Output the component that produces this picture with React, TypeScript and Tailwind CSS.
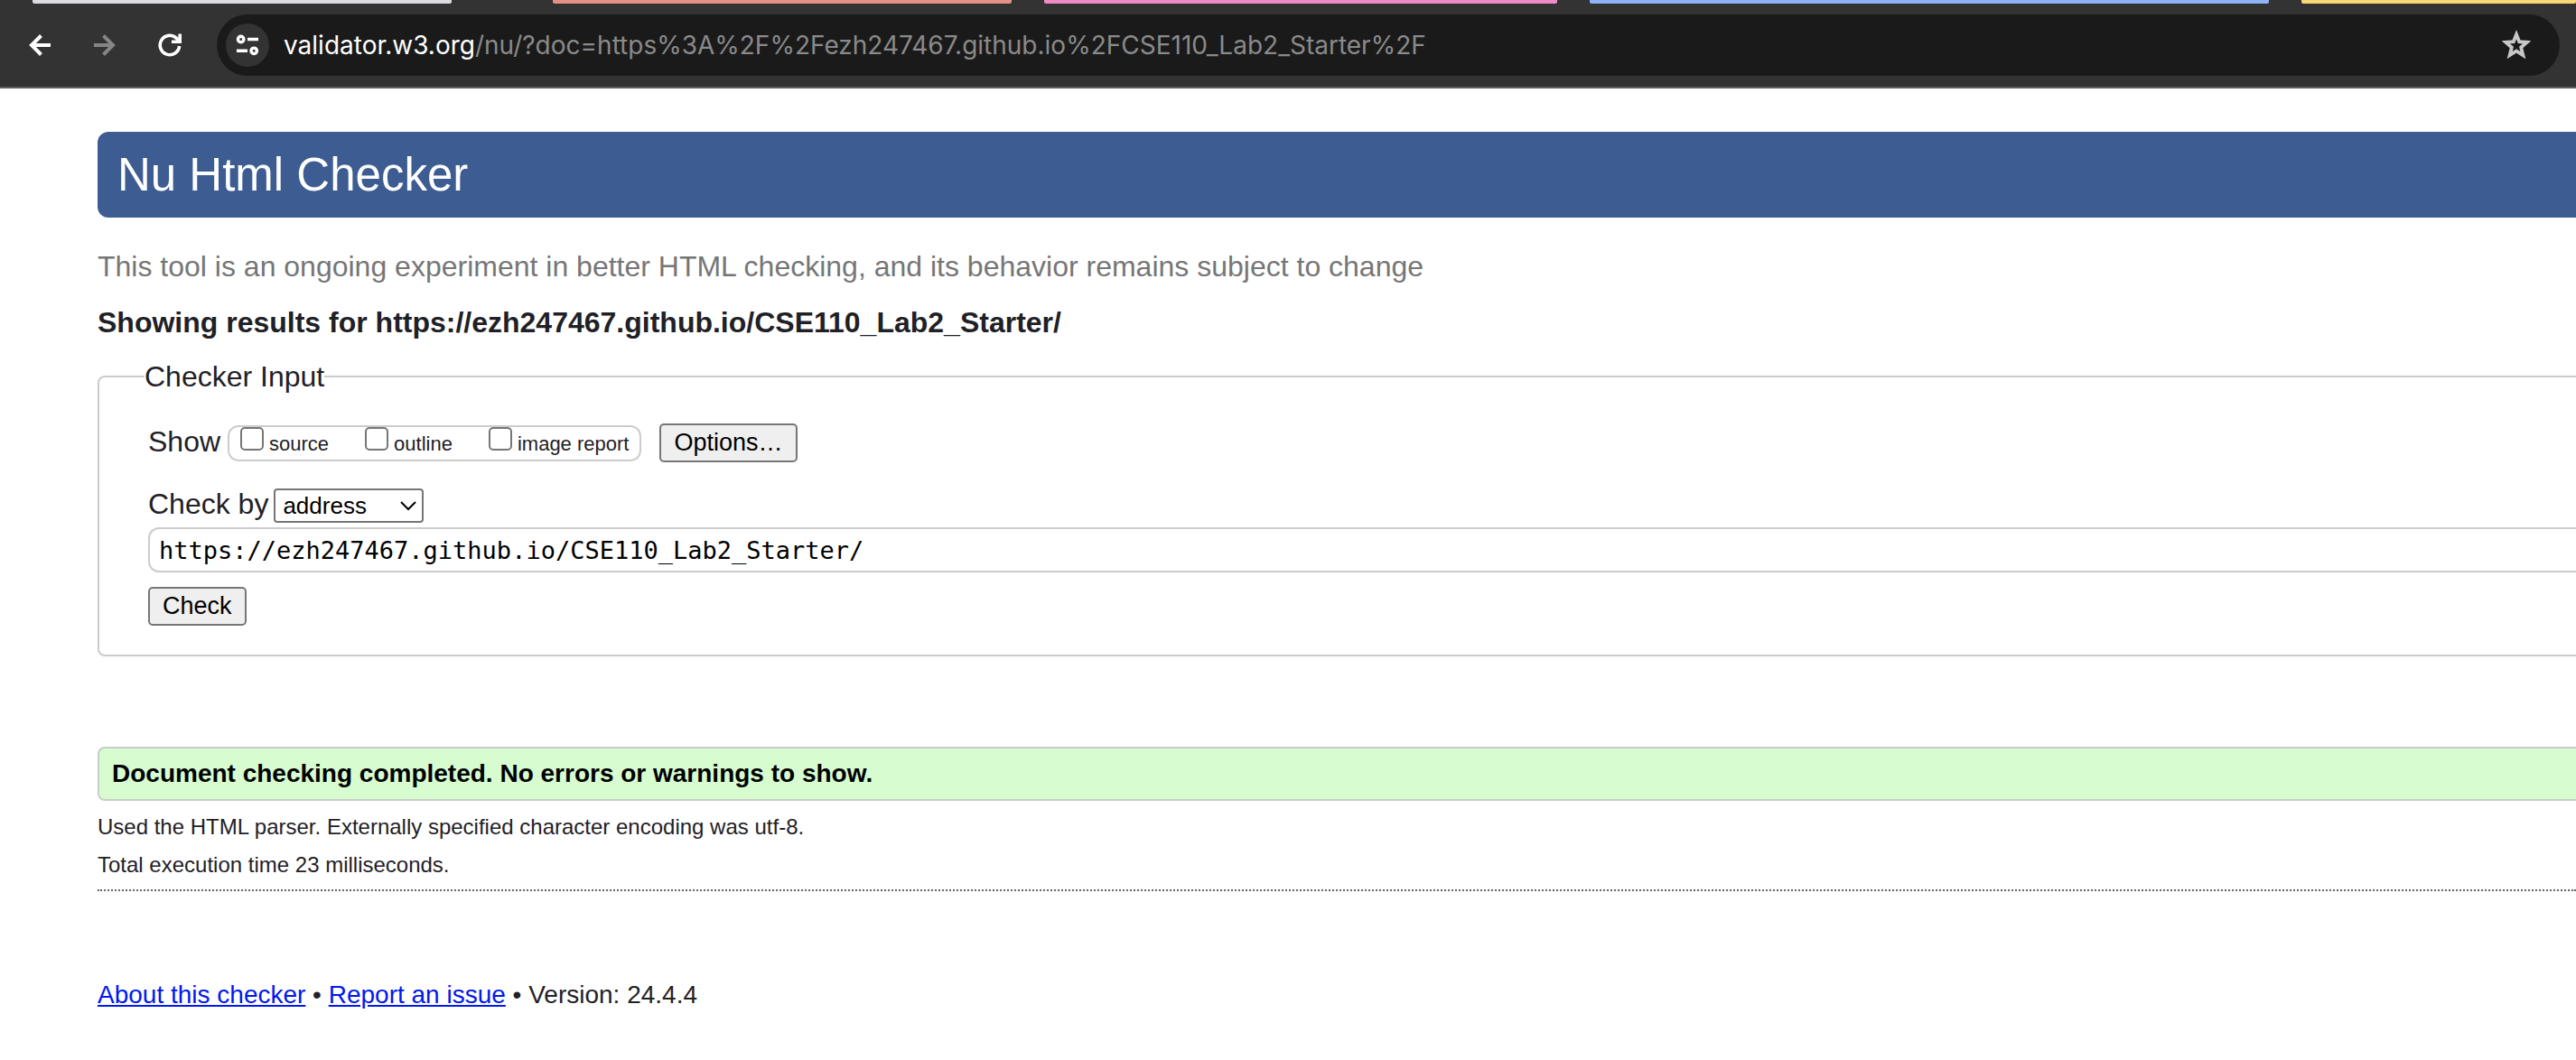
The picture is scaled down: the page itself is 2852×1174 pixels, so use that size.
import React from "react";

const tabs = [
  { color: "bg-[#dadce0]", place: "ml-9 w-[464px]" },
  { color: "bg-[#e49086]", place: "ml-28 w-[508px]" },
  { color: "bg-[#f08cc5]", place: "ml-9 w-[568px]" },
  { color: "bg-[#8fb3f7]", place: "ml-9 w-[752px]" },
  { color: "bg-[#f8d775]", place: "ml-9 flex-1" },
];

function BrowserBar() {
  return (
    <header className="border-b-2 border-[#5f5f5f] bg-[#333333] pb-3">
      <div className="flex h-1 overflow-hidden">
        {tabs.map((t) => (
          <div key={t.color} className={`h-1 min-w-0 rounded-b-xs ${t.color} ${t.place}`} />
        ))}
      </div>
      <nav className="mt-3 flex items-center pr-[18px]">
        <div className="flex w-60 shrink-0 items-center gap-8 pl-6">
          <button aria-label="Back" className="size-10 text-white">
            <svg viewBox="0 0 40 40" fill="none" stroke="currentColor" strokeWidth="4">
              <path d="M32 20H11M21.5 9.500L11 20l10.500 10.500" />
            </svg>
          </button>
          <button aria-label="Forward" className="size-10 text-[#858585]">
            <svg viewBox="0 0 40 40" fill="none" stroke="currentColor" strokeWidth="4">
              <path d="M8 20h21M18.500 9.500L29 20 18.500 30.500" />
            </svg>
          </button>
          <button aria-label="Reload" className="size-10 text-white">
            <svg viewBox="0 0 40 40" fill="none" stroke="currentColor" strokeWidth="3.600">
              <path d="M30.600 21A10.700 10.700 0 1 1 27.500 12.400L30.500 15.500" />
              <path d="M31.200 7.500V16.200H22" />
            </svg>
          </button>
        </div>
        <div className="flex h-[68px] min-w-0 flex-1 items-center rounded-full bg-[#1a1a1a] pr-7 pl-2.5">
          <button aria-label="View site information" className="flex size-12 shrink-0 items-center justify-center rounded-full bg-[#333333] text-white">
            <svg className="size-8" viewBox="0 0 32 32" fill="none" stroke="currentColor" strokeWidth="3.400">
              <circle cx="8.700" cy="9.500" r="3.200" />
              <path d="M16 9.500H28M4 22.300h12" />
              <circle cx="23.200" cy="22.300" r="3.200" />
            </svg>
          </button>
          <p className="ml-4 flex-1 truncate font-[Inter,sans-serif] text-[28px] leading-9 text-[#8a8a8a]">
            <span className="text-white">validator.w3.org</span>
            /nu/?doc=https%3A%2F%2Fezh247467.github.io%2FCSE110_Lab2_Starter%2F
          </p>
          <button aria-label="Bookmark this tab" className="size-10 text-[#c7c7c7]">
            <svg viewBox="0 0 24 24" fill="none" stroke="currentColor" strokeWidth="2.300">
              <path d="M12 4.900L13.900 9.700 19 10.100 15.100 13.500 16.400 18.700 12 15.900 7.600 18.700 8.900 13.500 5 10.100 10.100 9.700z" />
            </svg>
          </button>
        </div>
      </nav>
    </header>
  );
}

function ShowOption({ label }: { label: string }) {
  return (
    <label className="flex items-start gap-1.5">
      <input type="checkbox" className="size-[26px] appearance-none rounded-[5px] border-2 border-[#767676] bg-white" />
      <span className="pt-[5px] text-[22px] leading-7">{label}</span>
    </label>
  );
}

const button = "rounded-[5px] border-2 border-[#767676] bg-[#efefef] px-3.5 text-[27px] leading-[39px] text-black";

export default function App() {
  return (
    <div className="min-h-screen bg-white font-['Liberation_Sans',Arial,sans-serif] text-[#1f2126]">
      <BrowserBar />
      <main className="pt-12 pl-27">
        <h1 className="rounded-l-xl bg-[#3d5d92] px-[22px] text-[51px] leading-[95px] text-white">Nu Html Checker</h1>
        <p className="mt-9 text-[32px] leading-9 text-[#767676]">
          This tool is an ongoing experiment in better HTML checking, and its behavior remains subject to change
        </p>
        <h2 className="mt-[26px] text-[32px] leading-9 font-bold">
          Showing results for https://ezh247467.github.io/CSE110_Lab2_Starter/
        </h2>
        <form onSubmit={(e) => e.preventDefault()}>
          <fieldset className="mt-6 rounded-l-lg border-2 border-r-0 border-[#cccccc] pb-8 pl-[50px]">
            <legend className="text-[32px] leading-9">Checker Input</legend>
            <div className="mt-[34px] ml-1 flex items-center">
              <span className="mr-2 pb-1 text-[32px] leading-9">Show</span>
              <div className="flex h-10 gap-10 rounded-xl border-2 border-[#cccccc] px-3">
                <ShowOption label="source" />
                <ShowOption label="outline" />
                <ShowOption label="image report" />
              </div>
              <button type="button" className={`ml-5 ${button}`}>Options…</button>
            </div>
            <div className="mt-7 ml-1 flex items-center">
              <label htmlFor="docselect" className="mr-1.5 pb-1 text-[32px] leading-9">Check by</label>
              <div className="relative">
                <select id="docselect" className="block h-[38px] w-[166px] appearance-none rounded-sm border-2 border-[#767676] bg-white pl-2 text-[26px] leading-8 text-black">
                  <option>address</option>
                </select>
                <svg className="pointer-events-none absolute top-3 right-2 h-3.5 w-4.5" viewBox="0 0 18 14" fill="none" stroke="black" strokeWidth="2">
                  <path d="M1 3l8 8 8-8" />
                </svg>
              </div>
            </div>
            <input
              type="text"
              aria-label="Address"
              defaultValue="https://ezh247467.github.io/CSE110_Lab2_Starter/"
              className="mt-1 ml-1 block h-[50px] w-[calc(100%-4px)] rounded-l-xl border-2 border-r-0 border-[#cccccc] pl-2.5 font-['DejaVu_Sans_Mono',monospace] text-[27px] text-black"
            />
            <button type="submit" className={`mt-4 ml-1 ${button}`}>Check</button>
          </fieldset>
        </form>
        <p className="mt-[100px] rounded-l-lg border-2 border-r-0 border-[#cccccc] bg-[#d6fccf] px-3.5 text-[28px] leading-[56px] font-bold text-black">
          Document checking completed. No errors or warnings to show.
        </p>
        <p className="mt-[13px] text-[24px] leading-8">Used the HTML parser. Externally specified character encoding was utf-8.</p>
        <p className="mt-2.5 text-[24px] leading-8">Total execution time 23 milliseconds.</p>
        <hr className="mt-[11px] border-t-2 border-dotted border-[#666666]" />
        <footer className="mt-[97px] pb-12 text-[28px] leading-9">
          <a href="#about" className="text-[#0018ee] underline">About this checker</a>
          {" • "}
          <a href="#issues" className="text-[#0018ee] underline">Report an issue</a>
          {" • Version: 24.4.4"}
        </footer>
      </main>
    </div>
  );
}
